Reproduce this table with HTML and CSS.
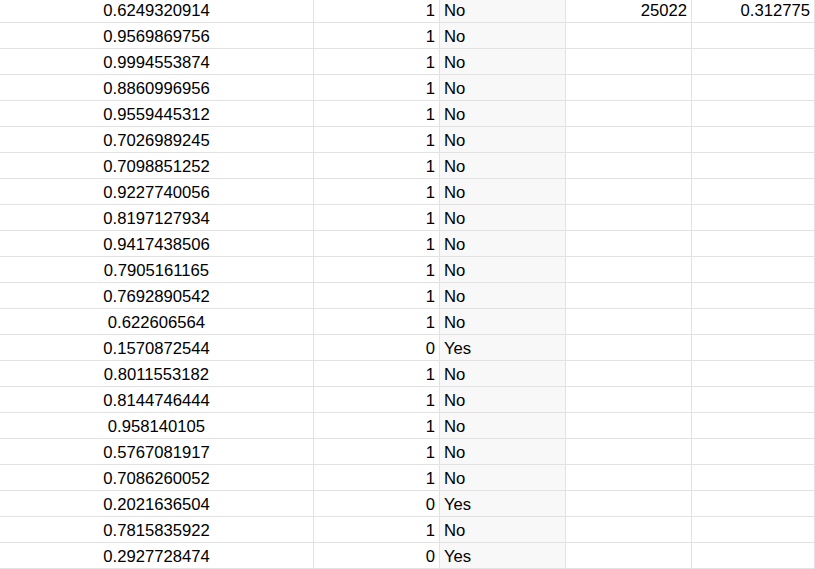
FILE: index.html
```html
<!DOCTYPE html>
<html>
<head>
<meta charset="utf-8">
<link rel="stylesheet" href="styles.css">
</head>
<body>
<div class="sheet">
  <div class="c num center">0.6249320914</div><div class="c right">1</div><div class="c txt">No</div><div class="c right">25022</div><div class="c right">0.312775</div>
  <div class="c center">0.9569869756</div><div class="c right">1</div><div class="c txt">No</div><div class="c"></div><div class="c"></div>
  <div class="c center">0.9994553874</div><div class="c right">1</div><div class="c txt">No</div><div class="c"></div><div class="c"></div>
  <div class="c center">0.8860996956</div><div class="c right">1</div><div class="c txt">No</div><div class="c"></div><div class="c"></div>
  <div class="c center">0.9559445312</div><div class="c right">1</div><div class="c txt">No</div><div class="c"></div><div class="c"></div>
  <div class="c center">0.7026989245</div><div class="c right">1</div><div class="c txt">No</div><div class="c"></div><div class="c"></div>
  <div class="c center">0.7098851252</div><div class="c right">1</div><div class="c txt">No</div><div class="c"></div><div class="c"></div>
  <div class="c center">0.9227740056</div><div class="c right">1</div><div class="c txt">No</div><div class="c"></div><div class="c"></div>
  <div class="c center">0.8197127934</div><div class="c right">1</div><div class="c txt">No</div><div class="c"></div><div class="c"></div>
  <div class="c center">0.9417438506</div><div class="c right">1</div><div class="c txt">No</div><div class="c"></div><div class="c"></div>
  <div class="c center">0.7905161165</div><div class="c right">1</div><div class="c txt">No</div><div class="c"></div><div class="c"></div>
  <div class="c center">0.7692890542</div><div class="c right">1</div><div class="c txt">No</div><div class="c"></div><div class="c"></div>
  <div class="c center">0.622606564</div><div class="c right">1</div><div class="c txt">No</div><div class="c"></div><div class="c"></div>
  <div class="c center">0.1570872544</div><div class="c right">0</div><div class="c txt">Yes</div><div class="c"></div><div class="c"></div>
  <div class="c center">0.8011553182</div><div class="c right">1</div><div class="c txt">No</div><div class="c"></div><div class="c"></div>
  <div class="c center">0.8144746444</div><div class="c right">1</div><div class="c txt">No</div><div class="c"></div><div class="c"></div>
  <div class="c center">0.958140105</div><div class="c right">1</div><div class="c txt">No</div><div class="c"></div><div class="c"></div>
  <div class="c center">0.5767081917</div><div class="c right">1</div><div class="c txt">No</div><div class="c"></div><div class="c"></div>
  <div class="c center">0.7086260052</div><div class="c right">1</div><div class="c txt">No</div><div class="c"></div><div class="c"></div>
  <div class="c center">0.2021636504</div><div class="c right">0</div><div class="c txt">Yes</div><div class="c"></div><div class="c"></div>
  <div class="c center">0.7815835922</div><div class="c right">1</div><div class="c txt">No</div><div class="c"></div><div class="c"></div>
  <div class="c center">0.2927728474</div><div class="c right">0</div><div class="c txt">Yes</div><div class="c"></div><div class="c"></div>
</div>
</body>
</html>
```
FILE: styles.css
```css
html, body {
  margin: 0;
  padding: 0;
  background: #ffffff;
  overflow: hidden;
}
.sheet {
  display: grid;
  grid-template-columns: 314px 126px 126px 126px 1fr;
  grid-auto-rows: 26px;
  margin-top: -3px;
  width: 815px;
  font-family: "Liberation Sans", Arial, sans-serif;
  font-size: 16.67px;
  color: #000000;
}
.c {
  box-sizing: border-box;
  border-right: 1px solid #e2e2e2;
  border-bottom: 1px solid #e2e2e2;
  padding: 2px 4px 0;
  line-height: 23px;
  white-space: nowrap;
  overflow: hidden;
}
.center { text-align: center; }
.right { text-align: right; }
.txt {
  text-align: left;
  background: #f8f8f8;
}
```
